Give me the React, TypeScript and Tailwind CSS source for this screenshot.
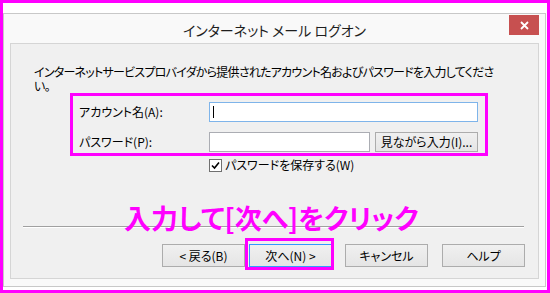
export default function App() {
  const btn =
    'w-[83px] h-[23px] flex items-center justify-center border border-[#acacac] bg-gradient-to-b from-[#f0f0f0] to-[#e5e5e5] text-[12px] leading-none text-[#000]'

  return (
    <div className="w-[550px] h-[293px] border-[3px] border-[#ff00ff] bg-white pt-[10px] pr-px pb-[3px] font-['Noto_Sans_CJK_JP',sans-serif] [font-feature-settings:'palt']">
      {/* window frame */}
      <div className="h-full border border-[#c8c8c8] bg-[#f9f9f9] flex flex-col px-[6px] pb-[7px]">
        {/* title bar */}
        <div className="relative h-[29px] flex items-center justify-center">
          <span className="mt-[2px] text-[14px] leading-none text-[#1e1e1e]">インターネット メール ログオン</span>
          <div className="absolute right-0 top-[1px] w-[30px] h-[20px] bg-[#c75050] flex items-center justify-center">
            <svg width="9" height="9" viewBox="0 0 9 9">
              <path d="M1 1L8 8M8 1L1 8" stroke="white" strokeWidth="1.8" />
            </svg>
          </div>
        </div>

        {/* client area */}
        <div className="relative flex-1 border border-[#d5d5d5] bg-[#f0f0f0] flex flex-col pt-[20px] pb-[11px]">
          <div className="pl-[23px] text-[12px] tracking-[-0.75px] text-[#000] whitespace-nowrap">
            <p className="leading-[15px]">インターネットサービスプロバイダから提供されたアカウント名およびパスワードを入力してくださ</p>
            <p className="leading-[13px]">い。</p>
          </div>

          {/* highlighted fields */}
          <div className="mt-px ml-[59px] w-[418px] h-[63px] border-[3px] border-[#ff00ff] flex flex-col gap-[10px] pt-[6px] pl-[6px]">
            <div className="flex items-center h-[20px]">
              <span className="w-[130px] text-[12px] text-[#000]">アカウント名(A):</span>
              <div className="w-[269px] h-[20px] border border-[#7eb4ea] bg-white flex items-center pl-[3px]">
                <div className="w-px h-[12px] bg-black" />
              </div>
            </div>
            <div className="flex items-center h-[20px]">
              <span className="w-[130px] text-[12px] text-[#000]">パスワード(P):</span>
              <div className="w-[161px] h-[20px] border border-[#abadb3] bg-white" />
              <div className="ml-[5px] w-[103px] h-[20px] flex items-center justify-center border border-[#acacac] bg-gradient-to-b from-[#f0f0f0] to-[#e5e5e5] text-[12px] leading-none">
                見ながら入力(I)...
              </div>
            </div>
          </div>

          {/* remember password */}
          <div className="mt-[2px] ml-[198px] flex items-center gap-[3px] h-[14px]">
            <div className="w-[13px] h-[13px] border border-[#707070] bg-white flex items-center justify-center">
              <svg width="9" height="9" viewBox="0 0 9 9">
                <path d="M1 4.5L3.5 7L8 1.5" stroke="#000" strokeWidth="1.6" fill="none" />
              </svg>
            </div>
            <span className="text-[12px] leading-none text-[#000]">パスワードを保存する(W)</span>
          </div>

          <div className="flex-1" />

          {/* separator */}
          <div className="ml-[12px] mr-[14px] h-[2px] border-t border-b border-t-[#a0a0a0] border-b-white" />

          {/* buttons */}
          <div className="mt-[16px] flex justify-end pr-[13px]">
            <div className={btn}>&lt; 戻る(B)</div>
            <div className="relative ml-[4px]">
              <div className={btn + ' !border-[#3399ff]'}>次へ(N) &gt;</div>
              <div className="absolute left-[-4px] right-[-2px] top-[-6px] bottom-[-3px] border-[3px] border-[#ff00ff]" />
            </div>
            <div className={btn + ' ml-[13px]'}>キャンセル</div>
            <div className={btn + ' ml-[14px]'}>ヘルプ</div>
          </div>

          {/* annotation */}
          <span className="absolute left-[113px] top-[160px] text-[27px] leading-[28px] font-bold text-[#ff00ff] whitespace-nowrap">
            入力して[次へ]をクリック
          </span>
        </div>
      </div>
    </div>
  )
}
